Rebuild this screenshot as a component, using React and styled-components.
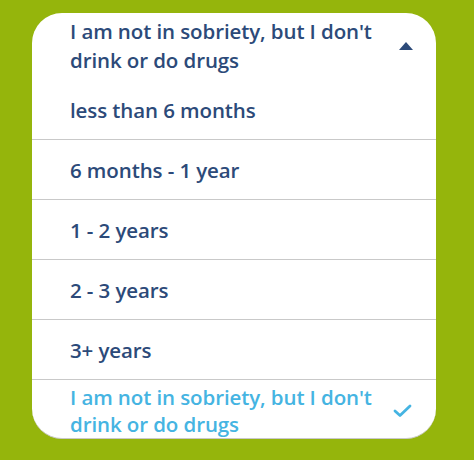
import React, { useState } from "react";
import styled, { createGlobalStyle } from "styled-components";

const GlobalStyle = createGlobalStyle`
  html, body {
    margin: 0;
    padding: 0;
    background: #95b50c;
  }
  body {
    font-family: "Open Sans", "Liberation Sans", sans-serif;
  }
`;

const Page = styled.div`
  width: 474px;
  height: 460px;
  padding: 13px 38px 0 32px;
  box-sizing: border-box;
  background: #95b50c;
`;

const Card = styled.div`
  width: 404px;
  height: 426px;
  background: #ffffff;
  border-radius: 30px;
  border-bottom: 1px solid #c9c9c9;
  box-sizing: border-box;
  overflow: hidden;
  display: flex;
  flex-direction: column;
`;

const Header = styled.div`
  height: 66px;
  flex-shrink: 0;
  display: flex;
  align-items: center;
  justify-content: space-between;
  padding: 0 23px 0 38px;
  box-sizing: border-box;
`;

const Label = styled.span`
  font-size: 20.5px;
  font-weight: 600;
  line-height: ${(p) => (p.$selected ? "27px" : "29px")};
  letter-spacing: -0.1px;
  color: ${(p) => (p.$selected ? "#45b4e2" : "#2c4a79")};
  max-width: 320px;
`;

const Option = styled.div`
  height: 60px;
  flex-shrink: 0;
  display: flex;
  align-items: center;
  justify-content: space-between;
  padding: 2px 24px 0 38px;
  box-sizing: border-box;
  border-top: ${(p) => (p.$first ? "none" : "1px solid #c9c9c9")};
  cursor: pointer;
`;

const Caret = () => (
  <svg width="14" height="8" viewBox="0 0 14 8">
    <path d="M7 0 L14 8 L0 8 Z" fill="#2c4a79" />
  </svg>
);

const Check = () => (
  <svg width="19" height="15" viewBox="0 0 19 15">
    <path
      d="M2 8 L7 12.5 L17 3"
      fill="none"
      stroke="#45b4e2"
      strokeWidth="2.8"
      strokeLinecap="round"
      strokeLinejoin="round"
    />
  </svg>
);

const options = [
  "less than 6 months",
  "6 months - 1 year",
  "1 - 2 years",
  "2 - 3 years",
  "3+ years",
  "I am not in sobriety, but I don't drink or do drugs",
];

export default function App() {
  const [selected, setSelected] = useState(options.length - 1);

  return (
    <Page>
      <GlobalStyle />
      <Card>
        <Header>
          <Label>{options[selected]}</Label>
          <Caret />
        </Header>
        {options.map((item, i) => (
          <Option key={item} $first={i === 0} onClick={() => setSelected(i)}>
            <Label $selected={i === selected}>{item}</Label>
            {i === selected && <Check />}
          </Option>
        ))}
      </Card>
    </Page>
  );
}
